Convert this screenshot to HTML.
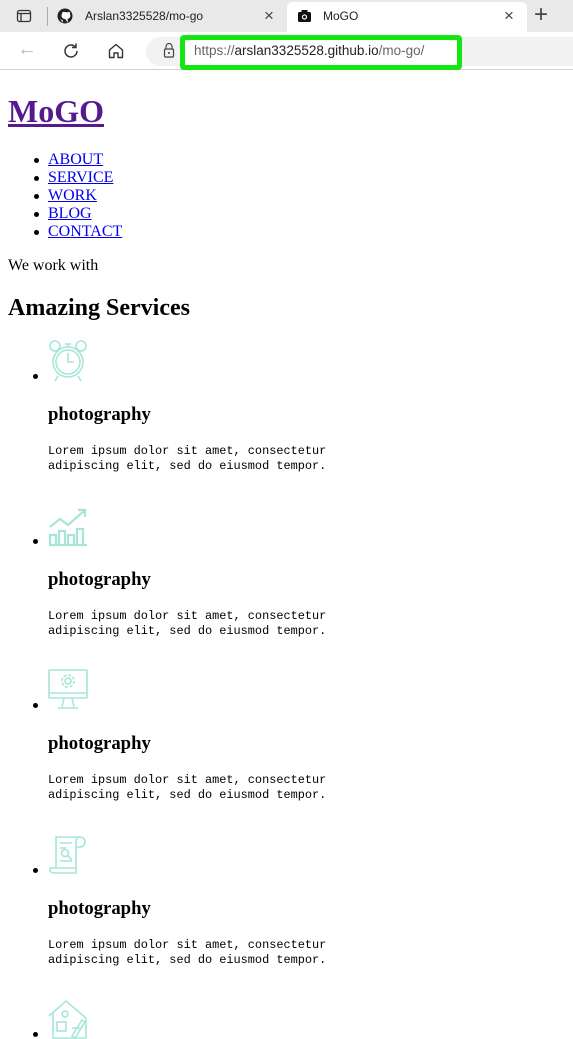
<!DOCTYPE html>
<html><head><meta charset="utf-8"><style>
*{box-sizing:border-box}
html,body{margin:0;width:573px;height:1039px;overflow:hidden;background:#fff}
body{font-family:"Liberation Serif",serif;color:#000;position:relative}
.abs{position:absolute}
.tabbar{left:0;top:0;width:573px;height:32px;background:#e9e9e9}
.tab2{left:287px;top:2px;width:240px;height:32px;background:#fff;border-radius:6px 6px 0 0}
.ui{font-family:"Liberation Sans",sans-serif;font-size:12px;color:#222}
.nav{left:0;top:32px;width:573px;height:38px;background:#fff;border-bottom:1px solid #d0d0d0}
.pill{left:146px;top:37px;width:427px;height:29px;background:#f2f2f2;border-radius:15px 0 0 15px}
.green{left:180px;top:35px;width:282px;height:35px;border:5px solid #14e614;border-radius:4px;background:#fff}
a{color:#0000ee}
h1{position:absolute;left:8px;top:93px;margin:0;font-size:32px;line-height:37px;font-weight:bold}
h1 a{color:#551a8b}
.menu{left:48px;top:151px;font-size:16px;line-height:18px}
.menu div{position:relative}
.menu div:before{content:"";position:absolute;left:-14px;top:7px;width:5px;height:5px;border-radius:50%;background:#000}
.t16{font-size:16px;line-height:18px}
h2{position:absolute;left:8px;top:294px;margin:0;font-size:24px;line-height:28px}
.item{position:absolute;left:0;width:573px;height:164px}
.item .bul{position:absolute;left:33px;top:39px;width:5px;height:5px;border-radius:50%;background:#000}
.item svg{position:absolute;left:48px;top:5px}
.item h3{position:absolute;left:48px;top:69px;margin:0;font-size:18.7px;line-height:22px}
.item p{position:absolute;left:48px;top:109px;margin:0;font-family:"Liberation Mono",monospace;font-size:11.9px;line-height:15px;white-space:pre}
</style></head><body>
<div class="abs tabbar"></div>
<svg class="abs" style="left:16px;top:8px" width="16" height="16" viewBox="0 0 16 16"><rect x="1.5" y="2.5" width="13" height="11" rx="2" fill="none" stroke="#333" stroke-width="1.3"/><line x1="1.5" y1="5.5" x2="14.5" y2="5.5" stroke="#333" stroke-width="1.3"/><line x1="5" y1="5.5" x2="5" y2="13.5" stroke="#333" stroke-width="1.3"/></svg>
<div class="abs" style="left:47px;top:7px;width:1px;height:19px;background:#aaa"></div>
<svg class="abs" style="left:57px;top:8px" width="16" height="16" viewBox="0 0 16 16"><circle cx="8" cy="8" r="7.5" fill="#222"/><path d="M5.5 14.5v-2.5c-1.5.3-2-.6-2.3-1.2M10.5 14.5v-2.6c0-.7-.3-1-.5-1.2 1.8-.2 3.2-.9 3.2-3.2 0-.7-.2-1.2-.6-1.7.1-.4.2-1.1-.1-1.8 0 0-.6-.2-1.8.6a6 6 0 0 0-3.2 0C6.3 3.8 5.7 4 5.7 4c-.3.7-.2 1.4-.1 1.8-.4.5-.6 1-.6 1.7 0 2.300 1.4 3 3.2 3.2" fill="#fff" stroke="#fff" stroke-width=".4"/><circle cx="8" cy="7.5" r="3.5" fill="#fff"/></svg>
<div class="abs ui" style="left:85px;top:9px">Arslan3325528/mo-go</div>
<div class="abs ui" style="left:264px;top:6px;font-size:17px;color:#444">×</div>
<div class="abs tab2"></div>
<svg class="abs" style="left:297px;top:9px" width="15" height="14" viewBox="0 0 15 14"><rect x="1" y="3" width="13" height="10" rx="1.5" fill="#111"/><rect x="4.5" y="1" width="6" height="3" fill="#111"/><circle cx="7.5" cy="8" r="2.6" fill="#fff"/><circle cx="7.5" cy="8" r="1.5" fill="#111"/></svg>
<div class="abs ui" style="left:323px;top:9px">MoGO</div>
<div class="abs ui" style="left:504px;top:6px;font-size:17px;color:#444">×</div>
<div class="abs ui" style="left:534px;top:1px;font-size:24px;color:#444;font-weight:300">+</div>
<div class="abs nav"></div>
<div class="abs ui" style="left:17px;top:38px;font-size:20px;color:#bbb">←</div>
<svg class="abs" style="left:62px;top:42px" width="18" height="18" viewBox="0 0 18 18"><path d="M15 9a6 6 0 1 1-2-4.5" fill="none" stroke="#333" stroke-width="1.5"/><path d="M14 1.5v4h-4" fill="none" stroke="#333" stroke-width="1.5"/></svg>
<svg class="abs" style="left:107px;top:42px" width="18" height="18" viewBox="0 0 18 18"><path d="M2.5 8L9 2.5 15.5 8v7.5h-4.5v-4.5h-4v4.5H2.5z" fill="none" stroke="#333" stroke-width="1.4" stroke-linejoin="round"/></svg>
<div class="abs pill"></div>
<svg class="abs" style="left:162px;top:42px" width="14" height="16" viewBox="0 0 14 16"><path d="M4 7V4.5a3 3 0 0 1 6 0V7" fill="none" stroke="#444" stroke-width="1.2"/><rect x="2.5" y="7" width="9" height="8" rx="1" fill="none" stroke="#444" stroke-width="1.2"/><circle cx="7" cy="11" r="1" fill="#444"/></svg>
<div class="abs green"></div>
<div class="abs ui" style="left:194px;top:43px;font-size:13.5px;color:#666">https://<span style="color:#222">arslan3325528.github.io</span>/mo-go/</div>

<h1><a href="#">MoGO</a></h1>
<div class="abs menu">
<div><a href="#">ABOUT</a></div><div><a href="#">SERVICE</a></div><div><a href="#">WORK</a></div><div><a href="#">BLOG</a></div><div><a href="#">CONTACT</a></div>
</div>
<div class="abs t16" style="left:8px;top:257px">We work with</div>
<h2>Amazing Services</h2>

<div class="item" style="top:335px"><span class="bul"></span>
<svg width="40" height="42" viewBox="0 0 40 42" fill="none" stroke="#a6e6d8" stroke-width="1.6"><circle cx="20" cy="22" r="15"/><circle cx="20" cy="22" r="12"/><path d="M20 13v9h6"/><circle cx="7" cy="6" r="5"/><circle cx="33" cy="6" r="5"/><path d="M17 4h6M20 4v3M10 36l-3 5M30 36l3 5"/></svg>
<h3>photography</h3><p>Lorem ipsum dolor sit amet, consectetur
adipiscing elit, sed do eiusmod tempor.</p></div>

<div class="item" style="top:500px"><span class="bul"></span>
<svg width="40" height="42" viewBox="0 0 40 42" fill="none" stroke="#a6e6d8" stroke-width="2.2"><path d="M2 22l10-8 8 6 16-14M30 5h7v7"/><path d="M2 40V30h6v10M11 40V26h6v14M20 40V30h6v10M29 40V24h6v16M1 40h38"/></svg>
<h3>photography</h3><p>Lorem ipsum dolor sit amet, consectetur
adipiscing elit, sed do eiusmod tempor.</p></div>

<div class="item" style="top:664px"><span class="bul"></span>
<svg width="40" height="42" viewBox="0 0 40 42" fill="none" stroke="#a6e6d8" stroke-width="1.6"><rect x="1" y="1" width="38" height="28" rx="1"/><path d="M1 24h38M16 29l-2 9M24 29l2 9M10 39h20"/><circle cx="20" cy="12" r="3"/><circle cx="20" cy="12" r="6" stroke-dasharray="3 1.7"/></svg>
<h3>photography</h3><p>Lorem ipsum dolor sit amet, consectetur
adipiscing elit, sed do eiusmod tempor.</p></div>

<div class="item" style="top:829px"><span class="bul"></span>
<svg width="40" height="42" viewBox="0 0 40 42" fill="none" stroke="#a6e6d8" stroke-width="1.6"><path d="M8 34V3h24a5 5 0 0 1 0 10h-4M32 3c-3 0-4 2-4 5v26"/><path d="M2 34h26v5H6a4 4 0 0 1-4-5z"/><path d="M12 9h12M12 14h6M12 27h12"/><circle cx="17" cy="19" r="3.5"/><path d="M20 22l4 4"/></svg>
<h3>photography</h3><p>Lorem ipsum dolor sit amet, consectetur
adipiscing elit, sed do eiusmod tempor.</p></div>

<div class="item" style="top:993px;height:46px"><span class="bul"></span>
<svg width="40" height="42" viewBox="0 0 40 42" fill="none" stroke="#a6e6d8" stroke-width="1.6"><path d="M1 18L18 3l20 17M5 15v25h33V20"/><rect x="9" y="24" width="9" height="9"/><circle cx="17" cy="16" r="3"/><path d="M24 38l10-16 3 2-10 16zM24 30h8"/></svg>
</div>
</body></html>
